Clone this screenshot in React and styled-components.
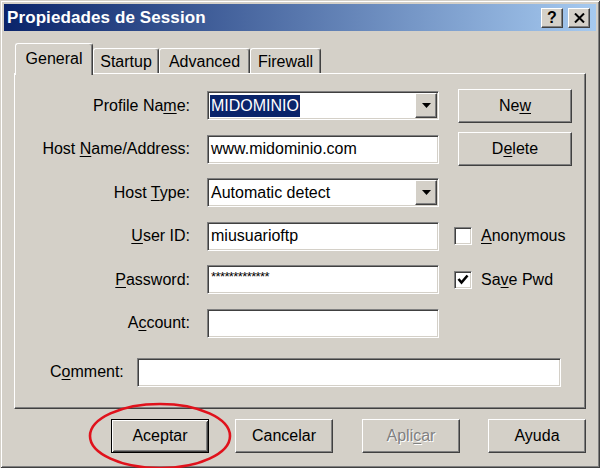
import styled, { createGlobalStyle } from 'styled-components';

const face = '#D4D0C8';

const GlobalStyle = createGlobalStyle`
  html, body {
    margin: 0;
    padding: 0;
    background: ${face};
    overflow: hidden;
  }
  body {
    font-family: "Liberation Sans", Arial, sans-serif;
  }
`;

const Window = styled.div`
  position: relative;
  box-sizing: border-box;
  width: 600px;
  height: 468px;
  padding: 4px;
  background: ${face};
  box-shadow: inset 1px 1px ${face}, inset -1px -1px #404040, inset 2px 2px #fff, inset -2px -2px #808080;
  display: flex;
  flex-direction: column;
  font-size: 16px;
  color: #000;
`;

const TitleBar = styled.div`
  height: 27px;
  display: flex;
  align-items: center;
  padding: 0 6px 0 3px;
  background: linear-gradient(to right, #0A246A, #A6CAF0);
`;

const Title = styled.span`
  flex: 1;
  color: #fff;
  font-weight: 700;
  font-size: 17px;
  letter-spacing: 0.1px;
`;

const raised = `
  border: 1px solid;
  border-color: #fff #404040 #404040 #fff;
  box-shadow: inset -1px -1px #808080, inset 1px 1px ${face};
`;

const sunken = `
  border: 1px solid;
  border-color: #808080 #fff #fff #808080;
  box-shadow: inset 1px 1px #404040, inset -1px -1px ${face};
`;

const TitleButton = styled.span`
  box-sizing: border-box;
  width: 22px;
  height: 20px;
  margin-left: 5px;
  background: ${face};
  ${raised}
  display: flex;
  align-items: center;
  justify-content: center;
  font-weight: 700;
  font-size: 16px;
  line-height: 1;
`;

const Body = styled.div`
  flex: 1;
  display: flex;
  flex-direction: column;
  padding: 12px 10px 0;
`;

const TabStrip = styled.div`
  height: 30px;
  display: flex;
  align-items: flex-end;
  padding-left: 1px;
  position: relative;
  z-index: 2;
`;

const Tab = styled.div`
  box-sizing: border-box;
  width: ${p => p.$w}px;
  height: ${p => (p.$active ? 32 : 25)}px;
  margin-bottom: ${p => (p.$active ? -2 : 0)}px;
  padding-top: ${p => (p.$active ? 5 : 3)}px;
  background: ${face};
  border-top: 1px solid #fff;
  border-left: 1px solid #fff;
  border-right: 1px solid #404040;
  border-radius: 3px 3px 0 0;
  box-shadow: inset -1px 0 #808080;
  text-align: center;
  line-height: 20px;
`;

const Panel = styled.div`
  box-sizing: border-box;
  height: 336px;
  ${raised}
  padding: 17px 0 0 0;
`;

const Form = styled.div`
  display: grid;
  grid-template-columns: 177px 232px 118px;
  grid-auto-rows: 29px;
  column-gap: 15px;
  row-gap: 14.6px;
`;

const Label = styled.label`
  justify-self: end;
  align-self: center;
  padding-right: 2px;
  white-space: nowrap;
`;

const Key = styled.span`
  text-decoration: underline;
  text-underline-offset: 2px;
`;

const Field = styled.div`
  box-sizing: border-box;
  width: ${p => p.$w || 232}px;
  height: 29px;
  background: #fff;
  ${sunken}
  display: flex;
  align-items: center;
  padding: 1px 1px 1px 3px;
  white-space: nowrap;
`;

const Selected = styled.span`
  background: #0A246A;
  color: #fff;
  line-height: 22px;
  padding: 0 1px;
  margin-left: -1px;
`;

const Stars = styled.span`
  font-size: 13px;
  letter-spacing: -0.6px;
  position: relative;
  top: -3px;
`;

const DropButton = styled.span`
  box-sizing: border-box;
  margin-left: auto;
  width: 22px;
  align-self: stretch;
  background: ${face};
  ${raised}
  display: flex;
  align-items: center;
  justify-content: center;
`;

const Button = styled.button`
  box-sizing: border-box;
  width: ${p => p.$w || 98}px;
  height: 34px;
  padding: 0;
  font: 16px "Liberation Sans", Arial, sans-serif;
  background: ${face};
  color: ${p => (p.disabled ? '#808080' : '#000')};
  text-shadow: ${p => (p.disabled ? '1px 1px #fff' : 'none')};
  ${raised}
  ${p => p.$default && `
    border: 1px solid #000;
    box-shadow: inset 1px 1px #fff, inset -1px -1px #404040, inset 2px 2px ${face}, inset -2px -2px #808080;
  `}
`;

const SideButton = styled(Button)`
  align-self: center;
  margin-left: 4px;
`;

const Check = styled.label`
  display: flex;
  align-items: center;
  gap: 9px;
  align-self: center;
`;

const Box = styled.span`
  box-sizing: border-box;
  width: 18px;
  height: 18px;
  background: #fff;
  ${sunken}
  display: flex;
  align-items: center;
  justify-content: center;
`;

const CommentRow = styled.div`
  display: flex;
  align-items: center;
  margin-top: 20px;
  padding-left: 35px;
`;

const CommentLabel = styled.label`
  width: 87px;
`;

const Footer = styled.div`
  display: flex;
  justify-content: flex-end;
  margin-top: 10px;
`;

const Slot = styled.span`
  position: relative;
  display: flex;
  margin-left: ${p => p.$gap || 0}px;
`;

const Ellipse = styled.svg`
  position: absolute;
  left: -24px;
  top: -18px;
  pointer-events: none;
`;

function Arrow() {
  return (
    <svg width="9" height="5" viewBox="0 0 9 5">
      <polygon points="0,0 9,0 4.5,5" fill="#000" />
    </svg>
  );
}

function Tick() {
  return (
    <svg width="12" height="11" viewBox="0 0 12 11">
      <polyline points="1.5,5 4.5,8.5 10.5,1.5" fill="none" stroke="#000" strokeWidth="2.6" />
    </svg>
  );
}

function Close() {
  return (
    <svg width="11" height="10" viewBox="0 0 11 10">
      <path d="M1 0.5 L10 9.5 M10 0.5 L1 9.5" stroke="#000" strokeWidth="2" />
    </svg>
  );
}

const tabs = [
  { name: 'General', w: 78, active: true },
  { name: 'Startup', w: 66 },
  { name: 'Advanced', w: 91 },
  { name: 'Firewall', w: 71 },
];

export default function App() {
  return (
    <>
      <GlobalStyle />
      <Window>
        <TitleBar>
          <Title>Propiedades de Session</Title>
          <TitleButton>?</TitleButton>
          <TitleButton><Close /></TitleButton>
        </TitleBar>
        <Body>
          <TabStrip>
            {tabs.map(t => (
              <Tab key={t.name} $w={t.w} $active={t.active}>{t.name}</Tab>
            ))}
          </TabStrip>
          <Panel>
            <Form>
              <Label>Profile Na<Key>m</Key>e:</Label>
              <Field>
                <Selected>MIDOMINIO</Selected>
                <DropButton><Arrow /></DropButton>
              </Field>
              <SideButton $w={114}>Ne<Key>w</Key></SideButton>

              <Label>Host <Key>N</Key>ame/Address:</Label>
              <Field>www.midominio.com</Field>
              <SideButton $w={114}>D<Key>e</Key>lete</SideButton>

              <Label>Host <Key>T</Key>ype:</Label>
              <Field>
                Automatic detect
                <DropButton><Arrow /></DropButton>
              </Field>
              <span />

              <Label><Key>U</Key>ser ID:</Label>
              <Field>miusuarioftp</Field>
              <Check><Box /><span><Key>A</Key>nonymous</span></Check>

              <Label><Key>P</Key>assword:</Label>
              <Field><Stars>*************</Stars></Field>
              <Check><Box><Tick /></Box><span>Sa<Key>v</Key>e Pwd</span></Check>

              <Label>A<Key>c</Key>count:</Label>
              <Field />
              <span />
            </Form>
            <CommentRow>
              <CommentLabel>C<Key>o</Key>mment:</CommentLabel>
              <Field $w={424} />
            </CommentRow>
          </Panel>
          <Footer>
            <Slot>
              <Button $default>Aceptar</Button>
              <Ellipse width="146" height="70" viewBox="0 0 146 70">
                <ellipse cx="73" cy="35" rx="70" ry="32" fill="none" stroke="#E0121C" strokeWidth="2.6" />
              </Ellipse>
            </Slot>
            <Slot $gap={26}><Button>Cancelar</Button></Slot>
            <Slot $gap={29}><Button disabled>Apli<Key>c</Key>ar</Button></Slot>
            <Slot $gap={28}><Button>Ayuda</Button></Slot>
          </Footer>
        </Body>
      </Window>
    </>
  );
}
